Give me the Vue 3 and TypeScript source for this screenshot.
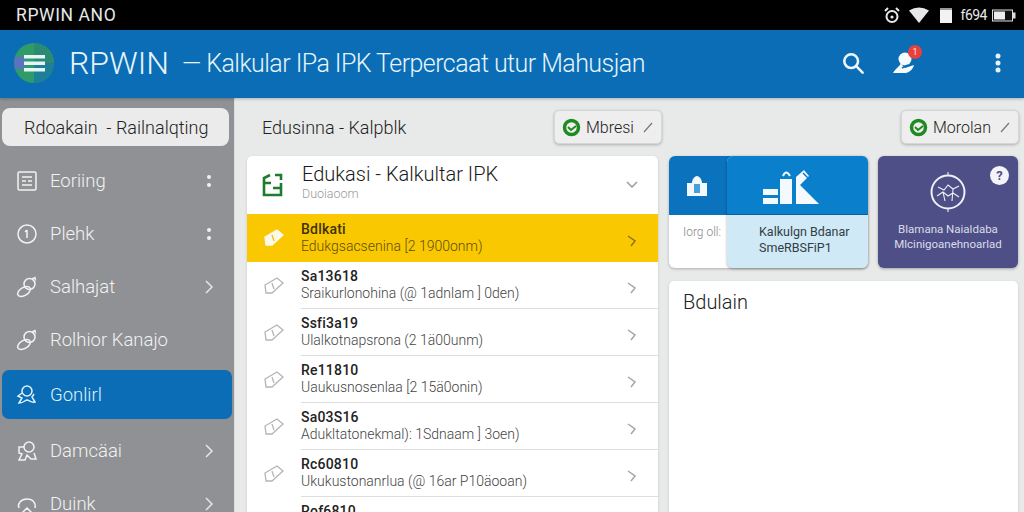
<template>
  <div class="screen">
    <div class="status-bar">
      <span class="status-title">RPWIN ANO</span>
      <div class="status-icons">
        <svg width="16" height="17" viewBox="0 0 16 17" fill="none" stroke="#e8e8e8" stroke-width="2"><circle cx="8" cy="9.500" r="5.500" /><path d="M1 4l3-3M15 4l-3-3" /><circle cx="8" cy="10" r="1.600" fill="#e8e8e8" stroke="none" /></svg>
        <svg width="20" height="16" viewBox="0 0 20 16"><path d="M0 3.500Q10-2.500 20 3.500L10 16z" fill="#e8e8e8" /></svg>
        <svg class="sim" width="12" height="16" viewBox="0 0 12 16"><path d="M0 1h12v15H0z" fill="#f2f2f2" /><path d="M0 1h12v2H0z" fill="#999" /></svg>
        <span class="status-time">f694</span>
        <svg width="24" height="13" viewBox="0 0 24 13"><rect x="0.500" y="1" width="20" height="11" fill="#111" stroke="#ddd" /><rect x="2" y="2.500" width="11" height="8" fill="#eee" /><rect x="21" y="3.500" width="2.500" height="6" fill="#ddd" /></svg>
      </div>
    </div>

    <header class="app-bar">
      <svg class="logo" width="40" height="42" viewBox="0 0 40 42">
        <circle cx="20" cy="21" r="20" fill="#2f9b68" />
        <path d="M20 1a20 20 0 0 1 20 20H20z" fill="#2a8a72" />
        <path d="M20 21h20a20 20 0 0 1-20 20z" fill="#1e7f98" />
        <path d="M1 15h10v12H1q-1.500-6 0-12z" fill="#5b72c0" />
        <path d="M10 13h21v3.500H10zM10 19.500h21V23H10zM10 26h21v3.500H10z" fill="#e6f3f7" />
      </svg>
      <span class="brand">RPWIN</span>
      <span class="app-title">— Kalkular IPa IPK Terpercaat utur Mahusjan</span>
      <div class="app-actions">
        <svg width="22" height="22" viewBox="0 0 24 24" fill="none" stroke="#eef6fb" stroke-width="2.800"><circle cx="10" cy="10" r="7.500" /><path d="M15.500 15.500l7 7" stroke-linecap="round" /></svg>
        <div class="bell">
          <svg width="24" height="24" viewBox="0 0 24 24"><circle cx="13" cy="8" r="6.500" fill="#f6fafc" /><path d="M9 12c-1 3-5 5-8 10h13c4-1 7-4 8-8l-9 3-3-3z" fill="#f6fafc" /><path d="M10 17l6-3" stroke="#0b6db5" stroke-width="1.800" /></svg>
          <span class="bell-badge">1</span>
        </div>
        <svg class="more" width="6" height="20" viewBox="0 0 6 20" fill="#e6f1f8"><circle cx="3" cy="3" r="2.500" /><circle cx="3" cy="10" r="2.500" /><circle cx="3" cy="17" r="2.500" /></svg>
      </div>
    </header>

    <div class="body">
      <aside class="sidebar">
        <div class="side-search">Rdoakain &nbsp;- Railnalqting</div>
        <nav class="side-nav">
          <div v-for="item in navItems" :key="item.label" class="nav-item" :class="{ active: item.active }">
            <svg class="nav-icon" width="22" height="22" viewBox="0 0 22 22" fill="none" stroke="currentColor" stroke-width="1.500" v-html="item.icon"></svg>
            <span class="nav-label">{{ item.label }}</span>
            <svg v-if="item.tail === 'dots'" class="nav-tail" width="12" height="14" viewBox="0 0 12 14" fill="#f0f0f0"><circle cx="6" cy="3" r="2" /><circle cx="6" cy="11" r="2" /></svg>
            <svg v-if="item.tail === 'chevron'" class="nav-tail" width="12" height="14" viewBox="0 0 12 14" fill="none" stroke="#e6e6e6" stroke-width="1.500"><path d="M3 1l6 6-6 6" /></svg>
          </div>
        </nav>
      </aside>

      <main class="content">
        <div class="left-col">
          <div class="page-head">
            <span class="page-title">Edusinna - Kalpblk</span>
            <div class="chip">
              <svg width="19" height="19" viewBox="0 0 19 19" fill="none"><circle cx="9.500" cy="9.500" r="7" stroke="#1f8a1f" stroke-width="3.500" /><path d="M6 9l3 3 5-4" stroke="#1f8a1f" stroke-width="2" /></svg>
              <span>Mbresi</span>
              <svg width="12" height="12" viewBox="0 0 12 12" fill="none" stroke="#777" stroke-width="1.200"><path d="M2 11L10 2" /></svg>
            </div>
          </div>

          <section class="list-card">
            <div class="list-head">
              <svg class="head-icon" width="21" height="24" viewBox="0 0 21 24" fill="none" stroke="#1e7d2c" stroke-width="2.600"><path d="M9 10H2v12h17V10M2 10V5l6-3M13 2h6v5M11 15h8" /></svg>
              <div class="head-text">
                <div class="head-title">Edukasi - Kalkultar IPK</div>
                <div class="head-sub">Duoiaoom</div>
              </div>
              <svg class="row-chevron-head" width="12" height="8" viewBox="0 0 12 8" fill="none" stroke="#9a9a9a" stroke-width="1.500"><path d="M1 1l5 5 5-5" /></svg>
            </div>
            <div v-for="row in rows" :key="row.title" class="row" :class="{ selected: row.selected }">
              <svg class="row-icon" width="20" height="18" viewBox="0 0 20 18"><path d="M1 8l12-7 6 5-11 10H2z" :fill="row.selected ? '#fdf8ea' : 'none'" :stroke="row.selected ? '#fdf8ea' : '#b5b5b5'" stroke-width="1.300" /><path d="M8 6l2 6" :stroke="row.selected ? '#f0c200' : '#b5b5b5'" stroke-width="1.300" /></svg>
              <div class="row-body">
                <div class="row-text">
                  <div class="row-title">{{ row.title }}</div>
                  <div class="row-sub">{{ row.sub }}</div>
                </div>
                <svg class="row-chevron" width="10" height="12" viewBox="0 0 10 12" fill="none" :stroke="row.selected ? '#8a7420' : '#a5a5a5'" stroke-width="1.500"><path d="M1 1l7 5-4 5" /></svg>
              </div>
            </div>
          </section>
        </div>

        <div class="right-col">
          <div class="right-head">
            <div class="chip">
              <svg width="19" height="19" viewBox="0 0 19 19" fill="none"><circle cx="9.500" cy="9.500" r="7" stroke="#1f8a1f" stroke-width="3.500" /><path d="M6 9l3 3 5-4" stroke="#1f8a1f" stroke-width="2" /></svg>
              <span>Morolan</span>
              <svg width="12" height="12" viewBox="0 0 12 12" fill="none" stroke="#777" stroke-width="1.200"><path d="M2 11L10 2" /></svg>
            </div>
          </div>

          <div class="tiles">
            <div class="tile-stack">
              <div class="tile-back">
                <div class="tile-back-top">
                  <svg width="22" height="22" viewBox="0 0 22 22" fill="#f2f8fc"><path d="M1 8h5c0-4 3-7 5-7s5 3 5 7h5v13H1z" /><path d="M8 9h6v9H8z" fill="#4a9fd6" /></svg>
                </div>
                <div class="tile-back-text">Iorg oll:</div>
              </div>
              <div class="tile-front">
                <div class="tile-front-top">
                  <svg width="56" height="36" viewBox="0 0 56 36" fill="#f3f9fd"><path d="M0 20h15v6H0zM0 29h15v6H0zM17 10h12v25H17z" /><path d="M20 7q3-7 7 0" fill="none" stroke="#f3f9fd" stroke-width="2" /><path d="M33 8l8-7 5 6-9 9 19 19H33z" /><path d="M40 4l5 5" stroke="#0a7fcc" stroke-width="1.500" /></svg>
                </div>
                <div class="tile-front-text">
                  <div>Kalkulgn Bdanar</div>
                  <div>SmeRBSFiP1</div>
                </div>
              </div>
            </div>
            <div class="tile-purple">
              <span class="help">?</span>
              <svg width="38" height="42" viewBox="0 0 38 42" fill="none" stroke="#f0f0f8" stroke-width="1.500"><circle cx="19" cy="21" r="16.500" stroke-width="2" /><path d="M19 1v4M19 37v4M9 16l6 3 4-5 5 4 6-3M8 25l6-4 5 4 5-3 6 4M14 21l2 9M24 18l-1 12" stroke-width="1.100" /></svg>
              <div class="purple-text">
                <div>Blamana Naialdaba</div>
                <div>Mlcinigoanehnoarlad</div>
              </div>
            </div>
          </div>

          <section class="note-card">Bdulain</section>
        </div>
      </main>
    </div>
  </div>
</template>

<script setup lang="ts">
interface NavItem {
  label: string
  icon: string
  tail?: 'dots' | 'chevron'
  active?: boolean
}

interface Row {
  title: string
  sub: string
  selected?: boolean
}

// two overlapping loops, same shape for both link rows
const linkIcon = '<ellipse cx="8" cy="15.500" rx="7" ry="4" transform="rotate(-32 8 15.500)"/><circle cx="13.500" cy="8" r="5.500"/><path d="M16 3l3-1.500 .5 3"/>'

const navItems: NavItem[] = [
  { label: 'Eoriing', tail: 'dots', icon: '<rect x="2" y="2" width="18" height="18" rx="1.500"/><path d="M6 7h10M6 11h4M12 11h4M6 15h10"/>' },
  { label: 'Plehk', tail: 'dots', icon: '<circle cx="11" cy="11" r="9"/><path d="M11 7v8M9 9l2-2"/>' },
  { label: 'Salhajat', tail: 'chevron', icon: linkIcon },
  { label: 'Rolhior Kanajo', icon: linkIcon },
  { label: 'Gonlirl', active: true, icon: '<circle cx="11" cy="7" r="5"/><path d="M6 9L2 12l4 2-3 5c5 0 6-3 8-3s4 3 8 2l-3-5 2-3"/>' },
  { label: 'Damcäai', tail: 'chevron', icon: '<circle cx="13" cy="7" r="5"/><path d="M8 7H3v6l3 1-3 6h6l2-5 4 4h5l-2-6"/>' },
  { label: 'Duink', tail: 'chevron', icon: '<path d="M3 15c-2-4 2-9 8-9s9 4 8 9"/><path d="M6 20l5-5 5 5"/>' }
]

const rows: Row[] = [
  { title: 'Bdlkati', sub: 'Edukgsacsenina [2 1900onm)', selected: true },
  { title: 'Sa13618', sub: 'Sraikurlonohina (@ 1adnlam ] 0den)' },
  { title: 'Ssfi3a19', sub: 'Ulalkotnapsrona (2 1ä00unm)' },
  { title: 'Re11810', sub: 'Uaukusnosenlaa [2 15ä0onin)' },
  { title: 'Sa03S16', sub: 'Adukltatonekmal): 1Sdnaam ] 3oen)' },
  { title: 'Rc60810', sub: 'Ukukustonanrlua (@ 16ar P10äooan)' },
  { title: 'Rof6810', sub: 'Ukukustonanrlua (@ 16ar P10äooan)' }
]
</script>

<style>
html,
body {
  margin: 0;
  overflow: hidden;
}
</style>

<style scoped>
.screen {
  width: 1024px;
  height: 512px;
  display: flex;
  flex-direction: column;
  overflow: hidden;
  background: #e8e9e9;
  font-family: 'Roboto', 'Liberation Sans', sans-serif;
}

.status-bar {
  height: 30px;
  flex-shrink: 0;
  display: flex;
  align-items: center;
  justify-content: space-between;
  padding: 0 8px 0 16px;
  background: #000000;
  color: #e8e8e8;
}

.status-title {
  font-size: 17.500px;
  letter-spacing: 0.6px;
}

.status-icons {
  display: flex;
  align-items: center;
  gap: 9px;
}

.sim {
  margin-left: 2px;
}

.status-time {
  font-size: 14px;
  letter-spacing: -0.5px;
  margin-right: -4px;
}

.app-bar {
  height: 68px;
  flex-shrink: 0;
  display: flex;
  align-items: center;
  padding: 0 23px 2px 14px;
  box-sizing: border-box;
  background: #0b6db5;
  color: #e6f5fb;
  box-shadow: 0 1px 3px rgba(0, 0, 0, 0.25);
  position: relative;
}

.logo {
  flex-shrink: 0;
}

.brand {
  margin-left: 15px;
  font-size: 32px;
  font-weight: 300;
}

.app-title {
  margin-left: 13px;
  font-size: 25px;
  font-weight: 300;
  letter-spacing: -0.55px;
  white-space: nowrap;
}

.app-actions {
  display: flex;
  align-items: center;
  margin-left: auto;
  gap: 28px;
}

.more {
  margin-left: 51px;
}

.bell {
  position: relative;
  width: 24px;
  height: 24px;
}

.bell-badge {
  position: absolute;
  top: -6px;
  right: -6px;
  width: 14px;
  height: 14px;
  border-radius: 50%;
  background: #e8403c;
  color: #fbe3e2;
  font-size: 9px;
  line-height: 14px;
  text-align: center;
}

.body {
  flex: 1;
  display: flex;
  min-height: 0;
}

.sidebar {
  width: 235px;
  flex-shrink: 0;
  padding: 10px 2px 0;
  box-sizing: border-box;
  background: #909194;
  border-right: 1px solid #dddddd;
}

.side-search {
  width: 227px;
  height: 38px;
  display: flex;
  align-items: center;
  padding-left: 22px;
  box-sizing: border-box;
  border-radius: 8px;
  background: #ebebeb;
  color: #222222;
  font-size: 18px;
  font-weight: 300;
  white-space: nowrap;
}

.side-nav {
  margin-top: 10px;
  display: flex;
  flex-direction: column;
  gap: 4px;
}

.nav-item {
  height: 49px;
  flex-shrink: 0;
  display: flex;
  align-items: center;
  padding: 0 17px 0 14px;
  border-radius: 7px;
  color: #f2f2f2;
}

.nav-item.active {
  background: #0b6db5;
  color: #dff3fb;
  margin: 2px 0 3px;
}

.nav-icon {
  flex-shrink: 0;
}

.nav-label {
  margin-left: 12px;
  font-size: 18.500px;
  font-weight: 300;
}

.nav-tail {
  margin-left: auto;
}

.content {
  flex: 1;
  display: flex;
  gap: 11px;
  padding: 0 6px 0 12px;
  min-width: 0;
}

.left-col {
  width: 411px;
  flex-shrink: 0;
}

.page-head {
  height: 58px;
  display: flex;
  align-items: center;
  justify-content: space-between;
  padding-left: 15px;
  margin-right: -4px;
}

.page-title {
  font-size: 18px;
  font-weight: 300;
  color: #1f1f1f;
}

.chip {
  width: 108px;
  height: 34px;
  display: flex;
  align-items: center;
  gap: 5px;
  padding: 0 7px;
  box-sizing: border-box;
  border: 1px solid #d6d6d6;
  border-radius: 5px;
  background: #eeeeee;
  box-shadow: 0 1px 3px rgba(0, 0, 0, 0.25);
  color: #222222;
  font-size: 16px;
  font-weight: 300;
}

.chip span {
  flex: 1;
  white-space: nowrap;
}

.list-card {
  border-radius: 5px 5px 0 0;
  background: #ffffff;
  box-shadow: 0 1px 3px rgba(0, 0, 0, 0.15);
}

.list-head {
  height: 58px;
  display: flex;
  align-items: center;
  padding: 0 20px 0 15px;
}

.head-icon {
  flex-shrink: 0;
}

.head-text {
  flex: 1;
  margin-left: 19px;
  padding-bottom: 6px;
}

.head-title {
  font-size: 20px;
  line-height: 24px;
  font-weight: 300;
  color: #1a1a1a;
}

.head-sub {
  font-size: 12.500px;
  line-height: 16px;
  font-weight: 300;
  color: #999999;
}

.row {
  height: 47px;
  display: flex;
  align-items: center;
  padding-left: 17px;
}

.row-icon {
  flex-shrink: 0;
}

.row-body {
  flex: 1;
  height: 100%;
  margin-left: 17px;
  padding-right: 21px;
  display: flex;
  align-items: center;
  justify-content: space-between;
  border-bottom: 1px solid #dedede;
  box-sizing: border-box;
}

.row-chevron {
  margin-top: 6px;
}

.row.selected {
  height: 48px;
  background: #fac800;
}

.row.selected .row-body {
  border-bottom: none;
}

.row-title {
  font-size: 14px;
  line-height: 17px;
  font-weight: 500;
  letter-spacing: 0.2px;
  color: #222222;
}

.row-sub {
  font-size: 14px;
  line-height: 17px;
  font-weight: 300;
  color: #444444;
  white-space: nowrap;
}

.selected .row-title {
  color: #3f3408;
}

.selected .row-sub {
  color: #5d4f0c;
}

.right-col {
  flex: 1;
  min-width: 0;
}

.right-head {
  height: 58px;
  display: flex;
  align-items: center;
  justify-content: flex-end;
  margin-right: -1px;
}

.right-head .chip {
  width: 118px;
}

.tiles {
  display: flex;
  gap: 10px;
}

.tile-stack {
  position: relative;
  width: 199px;
  height: 112px;
}

.tile-back {
  width: 100%;
  height: 100%;
  border-radius: 6px;
  overflow: hidden;
  background: #ffffff;
  box-shadow: 0 1px 3px rgba(0, 0, 0, 0.25);
}

.tile-back-top {
  height: 59px;
  display: flex;
  align-items: center;
  padding-left: 17px;
  background: #0b72bd;
}

.tile-back-text {
  padding: 10px 0 0 14px;
  font-size: 12px;
  font-weight: 300;
  color: #888888;
}

.tile-front {
  position: absolute;
  top: 0;
  right: 0;
  width: 141px;
  height: 112px;
  border-radius: 6px;
  overflow: hidden;
  background: #cfe9f6;
  box-shadow: 0 1px 3px rgba(0, 0, 0, 0.3);
}

.tile-front-top {
  height: 59px;
  display: flex;
  align-items: center;
  justify-content: center;
  padding: 3px 14px 0 0;
  box-sizing: border-box;
  background: #0a7fcc;
  border-bottom: 1px solid #0a5f99;
}

.tile-front-text {
  padding: 9px 0 0 32px;
  font-size: 12.500px;
  line-height: 16px;
  font-weight: 400;
  color: #333d44;
  white-space: nowrap;
}

.tile-purple {
  position: relative;
  width: 140px;
  height: 112px;
  flex-shrink: 0;
  display: flex;
  flex-direction: column;
  align-items: center;
  padding-top: 15px;
  box-sizing: border-box;
  border-radius: 6px;
  background: #4e4f86;
  box-shadow: 0 1px 3px rgba(0, 0, 0, 0.3);
}

.help {
  position: absolute;
  top: 10px;
  right: 9px;
  width: 19px;
  height: 19px;
  border-radius: 50%;
  background: #f4f4f8;
  color: #4e4f86;
  font-size: 13px;
  font-weight: 700;
  line-height: 19px;
  text-align: center;
}

.purple-text {
  margin-top: 9px;
  font-size: 11.500px;
  line-height: 15px;
  color: #dcdcec;
  text-align: center;
  white-space: nowrap;
}

.note-card {
  height: 240px;
  margin-top: 13px;
  padding: 9px 14px;
  box-sizing: border-box;
  border-radius: 5px;
  background: #ffffff;
  box-shadow: 0 1px 3px rgba(0, 0, 0, 0.15);
  color: #222222;
  font-size: 20px;
  font-weight: 300;
}
</style>
